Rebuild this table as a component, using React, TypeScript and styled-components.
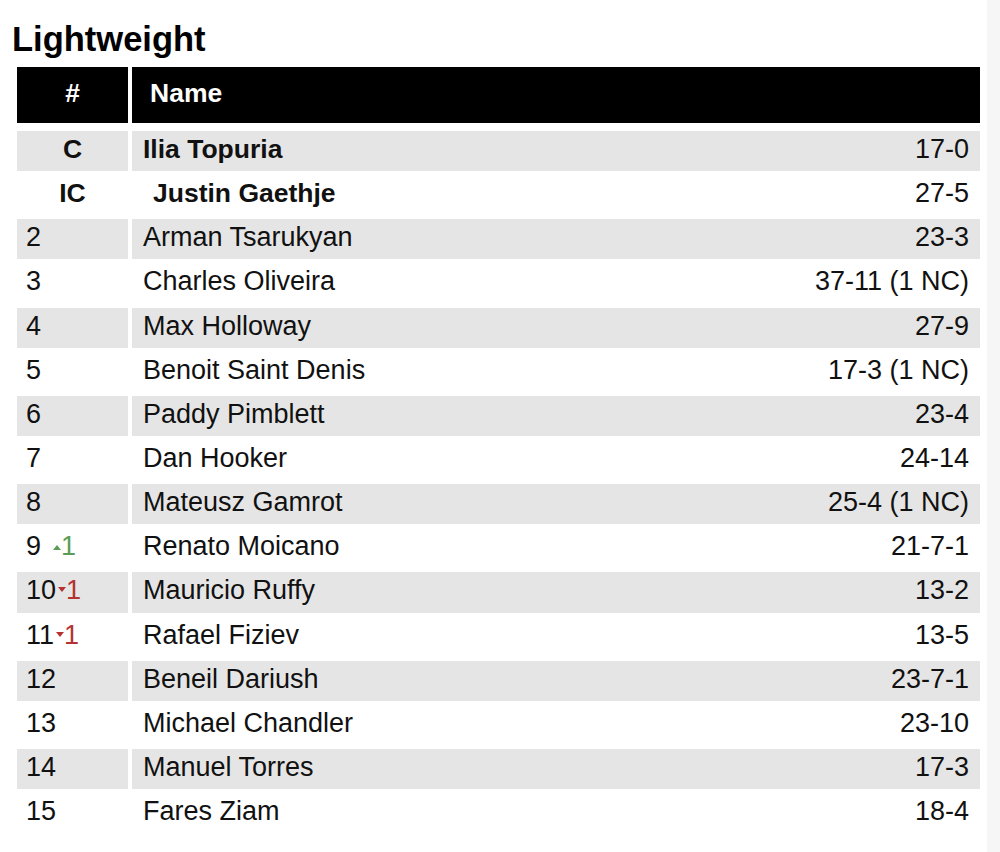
import React from 'react'
import styled, { createGlobalStyle } from 'styled-components'

const GlobalStyle = createGlobalStyle`
    html, body {
        margin: 0;
        padding: 0;
        background: #ffffff;
    }

    body {
        font-family: "Liberation Sans", Arial, Helvetica, sans-serif;
        color: #111111;
    }
`;

const PageStyle = styled.div`
    display: flex;
    min-height: 852px;
    width: 1000px;
`;

const MainStyle = styled.main`
    flex: 1;
    padding-top: 20px;
`;

const ScrollTrack = styled.div`
    width: 13px;
    background: #f6f6f6;
`;

const Title = styled.h2`
    margin: 0 0 8px;
    padding: 0 12px;
    font-size: 34.5px;
    font-weight: 700;
    line-height: 39px;
    color: #000000;
`;

const Table = styled.div`
    display: flex;
    flex-direction: column;
    gap: 4px;
    margin: 0 7px 0 17px;
`;

const Row = styled.div<{ $head?: boolean }>`
    display: grid;
    grid-template-columns: 111px 1fr;
    column-gap: 4px;
    height: ${p => (p.$head ? '56px' : '40.15px')};
    margin-bottom: ${p => (p.$head ? '4px' : '0')};
`;

const HeadCell = styled.div<{ $center?: boolean }>`
    display: flex;
    align-items: center;
    justify-content: ${p => (p.$center ? 'center' : 'flex-start')};
    padding: 0 0 4px ${p => (p.$center ? '0' : '18px')};
    background: #000000;
    color: #ffffff;
    font-size: 26.5px;
    font-weight: 700;
`;

const RankCell = styled.div<{ $shaded: boolean; $title?: boolean }>`
    display: flex;
    align-items: center;
    justify-content: ${p => (p.$title ? 'center' : 'flex-start')};
    padding: 0 0 3px ${p => (p.$title ? '0' : '9px')};
    background: ${p => (p.$shaded ? '#e5e5e5' : 'transparent')};
    font-size: ${p => (p.$title ? '26.5px' : '27px')};
    font-weight: ${p => (p.$title ? 700 : 400)};
`;

const RankNumber = styled.span`
    display: inline-block;
    min-width: 25px;
    margin-right: 2px;
`;

const Movement = styled.span<{ $up: boolean }>`
    display: inline-flex;
    align-items: center;
    color: ${p => (p.$up ? '#5a9d56' : '#b53230')};
    font-size: 27px;

    &::before {
        content: '';
        flex: none;
        width: 0;
        height: 0;
        margin: ${p => (p.$up ? '2px 0 0 0' : '0 0 2px 0')};
        border-left: 4px solid transparent;
        border-right: 4px solid transparent;
        ${p => (p.$up
            ? `border-bottom: 5px solid #5a9d56;`
            : `border-top: 5px solid #b53230;`)}
    }
`;

const NameCell = styled.div<{ $shaded: boolean }>`
    display: flex;
    align-items: center;
    justify-content: space-between;
    padding: 0 11px 3px 11px;
    background: ${p => (p.$shaded ? '#e5e5e5' : 'transparent')};
    font-size: 27px;
`;

const FighterName = styled.span<{ $champ?: boolean; $indent?: boolean }>`
    font-weight: ${p => (p.$champ ? 700 : 400)};
    font-size: ${p => (p.$champ ? '26.5px' : '27px')};
    padding-left: ${p => (p.$indent ? '10px' : '0')};
`;

const Record = styled.span`
    white-space: nowrap;
`;

type FIGHTER = {
    rank: string
    name: string
    record: string
    title?: boolean
    indent?: boolean
    move?: { up: boolean, by: number }
}

const fighters: FIGHTER[] = [
    { rank: 'C', name: 'Ilia Topuria', record: '17-0', title: true },
    { rank: 'IC', name: 'Justin Gaethje', record: '27-5', title: true, indent: true },
    { rank: '2', name: 'Arman Tsarukyan', record: '23-3' },
    { rank: '3', name: 'Charles Oliveira', record: '37-11 (1 NC)' },
    { rank: '4', name: 'Max Holloway', record: '27-9' },
    { rank: '5', name: 'Benoit Saint Denis', record: '17-3 (1 NC)' },
    { rank: '6', name: 'Paddy Pimblett', record: '23-4' },
    { rank: '7', name: 'Dan Hooker', record: '24-14' },
    { rank: '8', name: 'Mateusz Gamrot', record: '25-4 (1 NC)' },
    { rank: '9', name: 'Renato Moicano', record: '21-7-1', move: { up: true, by: 1 } },
    { rank: '10', name: 'Mauricio Ruffy', record: '13-2', move: { up: false, by: 1 } },
    { rank: '11', name: 'Rafael Fiziev', record: '13-5', move: { up: false, by: 1 } },
    { rank: '12', name: 'Beneil Dariush', record: '23-7-1' },
    { rank: '13', name: 'Michael Chandler', record: '23-10' },
    { rank: '14', name: 'Manuel Torres', record: '17-3' },
    { rank: '15', name: 'Fares Ziam', record: '18-4' },
];

const App = () => {
    return (
        <PageStyle>
            <GlobalStyle />
            <MainStyle>
                <Title>Lightweight</Title>
                <Table>
                    <Row $head>
                        <HeadCell $center>#</HeadCell>
                        <HeadCell>Name</HeadCell>
                    </Row>
                    {fighters.map((f, i) => {
                        const shaded = i % 2 === 0;
                        return (
                            <Row key={f.rank}>
                                <RankCell $shaded={shaded} $title={f.title}>
                                    {f.move ? <RankNumber>{f.rank}</RankNumber> : f.rank}
                                    {f.move && <Movement $up={f.move.up}>{f.move.by}</Movement>}
                                </RankCell>
                                <NameCell $shaded={shaded}>
                                    <FighterName $champ={f.title} $indent={f.indent}>{f.name}</FighterName>
                                    <Record>{f.record}</Record>
                                </NameCell>
                            </Row>
                        )
                    })}
                </Table>
            </MainStyle>
            <ScrollTrack />
        </PageStyle>
    )
}

export default App
